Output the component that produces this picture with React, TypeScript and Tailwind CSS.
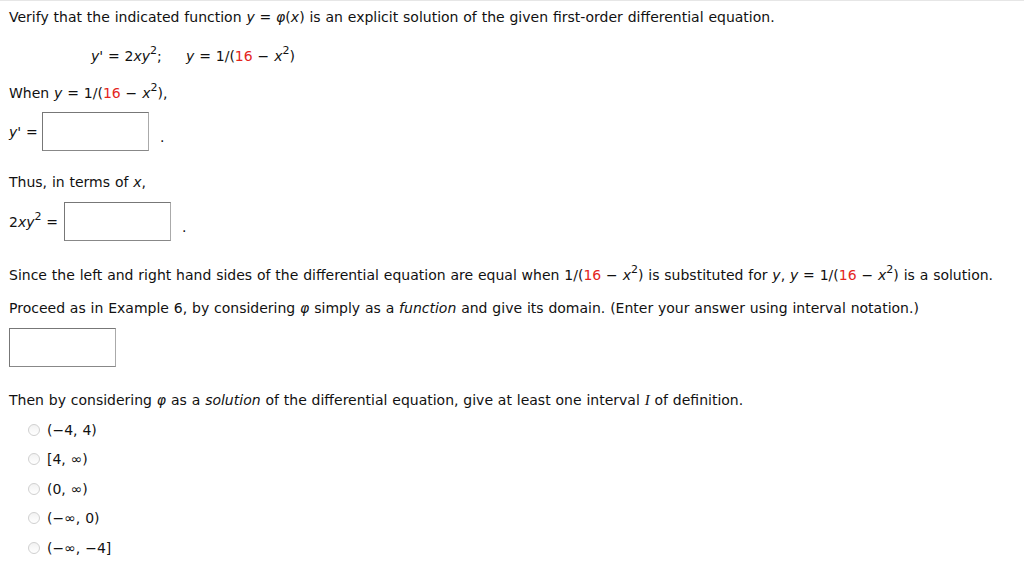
import React from 'react';

const Red = ({ children }: { children: React.ReactNode }) => <span className="text-[#e4261d]">{children}</span>;
const I = ({ children }: { children: React.ReactNode }) => <i>{children}</i>;
const Sup = ({ children }: { children: React.ReactNode }) => (
  <sup className="relative top-[-7px] text-[11px]">{children}</sup>
);

const Expr = () => (
  <>
    1/(<Red>16</Red> − <I>x</I>
    <Sup>2</Sup>)
  </>
);

const AnswerBox = ({ className = '' }: { className?: string }) => (
  <div
    className={`h-[39px] w-[107px] shrink-0 border border-t-[#777] border-l-[#777] border-b-[#888] border-r-[#aaa] bg-white ${className}`}
  />
);

const options = ['(−4, 4)', '[4, ∞)', '(0, ∞)', '(−∞, 0)', '(−∞, −4]'];

export default function App() {
  return (
    <div
      className="min-h-screen border-t border-[#e6e6e6] bg-white px-[9px] text-[14px] leading-[20px] text-[#111] [word-spacing:0.4px]"
      style={{ fontFamily: '"DejaVu Sans", Verdana, sans-serif' }}
    >
      <p className="pt-[6px]">
        Verify that the indicated function <I>y</I> = <I>φ</I>(<I>x</I>) is an explicit solution of the given
        first-order differential equation.
      </p>
      <p className="mt-[19px] pl-[82px]">
        <I>y'</I> = 2<I>xy</I>
        <Sup>2</Sup>;&nbsp;&nbsp;&nbsp;&nbsp; <I>y</I> = <Expr />
      </p>
      <p className="mt-[17px]">
        When <I>y</I> = <Expr />,
      </p>
      <div className="mt-[9px] flex items-center">
        <span className="w-[33px]">
          <I>y'</I> =
        </span>
        <AnswerBox />
        <span className="ml-[11px] mt-[10px]">.</span>
      </div>
      <p className="mt-[21px]">
        Thus, in terms of <I>x</I>,
      </p>
      <div className="mt-[10px] flex items-center">
        <span className="mr-[6px] whitespace-nowrap">
          2<I>xy</I>
          <Sup>2</Sup> =
        </span>
        <AnswerBox />
        <span className="ml-[11px] mt-[10px]">.</span>
      </div>
      <p className="mt-[24px] whitespace-nowrap">
        Since the left and right hand sides of the differential equation are equal when <Expr /> is substituted for{' '}
        <I>y</I>, <I>y</I> = <Expr /> is a solution.
      </p>
      <p className="mt-[13px]">
        Proceed as in Example 6, by considering <I>φ</I> simply as a <I>function</I> and give its domain. (Enter your
        answer using interval notation.)
      </p>
      <AnswerBox className="mt-[10px]" />
      <p className="mt-[23px]">
        Then by considering <I>φ</I> as a <I>solution</I> of the differential equation, give at least one interval{' '}
        <i style={{ fontFamily: '"Liberation Serif", serif' }} className="text-[15px]">
          I
        </i>{' '}
        of definition.
      </p>
      <ul className="mt-[5px] pl-[19px]">
        {options.map((o) => (
          <li key={o} className="flex h-[29.5px] items-center">
            <span className="mr-[7px] inline-block h-[12px] w-[12px] rounded-full border border-[#d0d0d0] bg-gradient-to-b from-[#f2f2f2] to-white" />
            <span>{o}</span>
          </li>
        ))}
      </ul>
    </div>
  );
}
